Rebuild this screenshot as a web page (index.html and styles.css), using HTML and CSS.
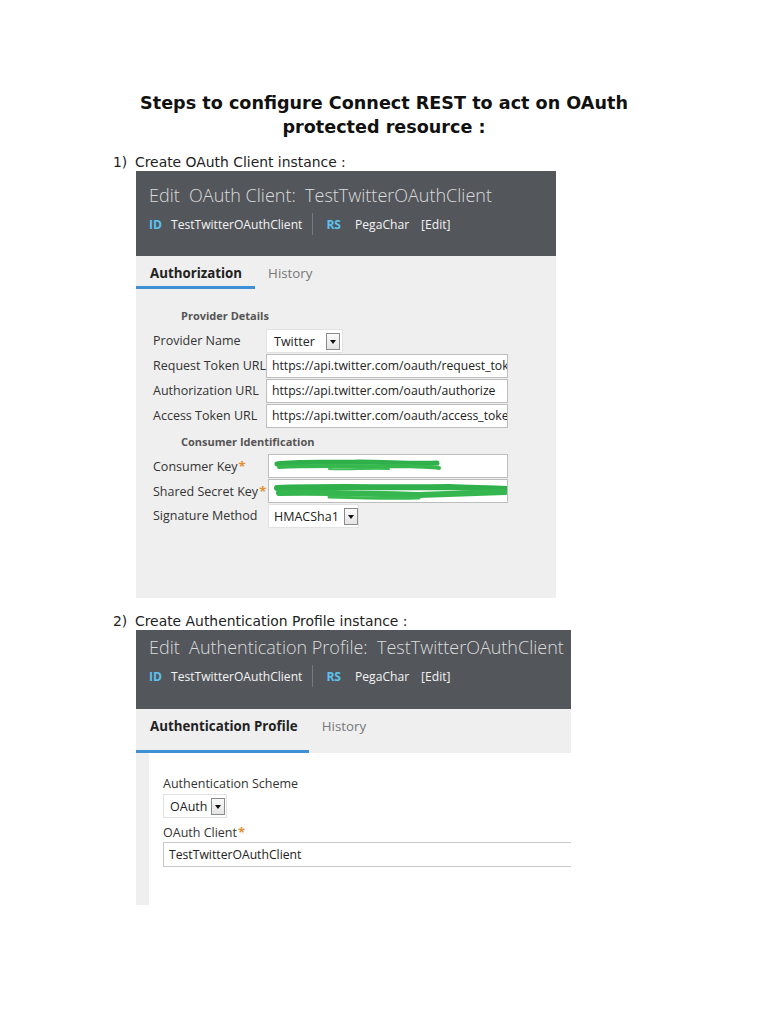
FILE: index.html
```html
<!DOCTYPE html>
<html>
<head>
<meta charset="utf-8">
<link rel="stylesheet" href="styles.css">
</head>
<body>
<div class="page">
  <h1 class="title">Steps to configure Connect REST to act on OAuth<br>protected resource :</h1>

  <div class="step"><span class="num">1)</span><span class="step-text">Create OAuth Client instance :</span></div>

  <div class="shot shot1">
    <div class="hdr">
      <div class="hdr-title">Edit&nbsp; OAuth Client:&nbsp; TestTwitterOAuthClient</div>
      <div class="hdr-meta">
        <span class="tag">ID</span><span class="meta-val">TestTwitterOAuthClient</span>
        <span class="sep"></span>
        <span class="tag tag-rs">RS</span><span class="meta-val">PegaChar</span><span class="meta-edit">[Edit]</span>
      </div>
    </div>
    <div class="tabs">
      <div class="tab active">Authorization</div>
      <div class="tab">History</div>
    </div>
    <div class="form1">
      <div class="section">Provider Details</div>
      <div class="grid g1">
        <div class="lbl">Provider Name</div>
        <div class="sel sel-twitter"><span>Twitter</span><span class="ddbtn"></span></div>
        <div class="lbl">Request Token URL</div>
        <div class="inp w242">https://api.twitter.com/oauth/request_token</div>
        <div class="lbl">Authorization URL</div>
        <div class="inp w242">https://api.twitter.com/oauth/authorize</div>
        <div class="lbl">Access Token URL</div>
        <div class="inp w242">https://api.twitter.com/oauth/access_token</div>
      </div>
      <div class="section sec2">Consumer Identification</div>
      <div class="grid g2">
        <div class="lbl">Consumer Key<span class="req">*</span></div>
        <div class="inp w240 redact">
          <svg class="scribble" width="240" height="24" viewBox="0 0 240 24">
            <path d="M8 9 C30 6 60 8 90 7 C120 7 140 9 168 8" stroke="#2fb04a" stroke-width="5" fill="none" stroke-linecap="round"/>
            <path d="M10 12 C50 10 100 12 140 11 C155 12 163 12 170 13" stroke="#37b84f" stroke-width="4" fill="none" stroke-linecap="round"/>
            <path d="M60 14 C80 15 100 13 120 14" stroke="#3cbb53" stroke-width="2" fill="none" stroke-linecap="round"/>
          </svg>
        </div>
        <div class="lbl">Shared Secret Key<span class="req">*</span></div>
        <div class="inp w240 redact">
          <svg class="scribble" width="240" height="24" viewBox="0 0 240 24">
            <path d="M8 8 C60 6 120 8 180 7 C205 8 225 8 238 9" stroke="#2fb04a" stroke-width="6" fill="none" stroke-linecap="round"/>
            <path d="M10 13 C60 12 110 14 150 15 C175 14 200 13 236 12" stroke="#36b64e" stroke-width="6" fill="none" stroke-linecap="round"/>
            <path d="M60 17 C90 18 120 19 150 18" stroke="#3cbb53" stroke-width="3" fill="none" stroke-linecap="round"/>
          </svg>
        </div>
        <div class="lbl">Signature Method</div>
        <div class="sel sel-hmac"><span>HMACSha1</span><span class="ddbtn"></span></div>
      </div>
    </div>
  </div>

  <div class="step step2"><span class="num">2)</span><span class="step-text">Create Authentication Profile instance :</span></div>

  <div class="shot shot2">
    <div class="hdr hdr2">
      <div class="hdr-title">Edit&nbsp; Authentication Profile:&nbsp; TestTwitterOAuthClient</div>
      <div class="hdr-meta">
        <span class="tag">ID</span><span class="meta-val">TestTwitterOAuthClient</span>
        <span class="sep"></span>
        <span class="tag tag-rs">RS</span><span class="meta-val">PegaChar</span><span class="meta-edit">[Edit]</span>
      </div>
    </div>
    <div class="tabs tabs2">
      <div class="tab active">Authentication Profile</div>
      <div class="tab">History</div>
    </div>
    <div class="body2">
      <div class="content2">
        <div class="lbl2">Authentication Scheme</div>
        <div class="sel sel-oauth"><span>OAuth</span><span class="ddbtn"></span></div>
        <div class="lbl2 lbl2b">OAuth Client<span class="req">*</span></div>
        <div class="inp inp-client">TestTwitterOAuthClient</div>
      </div>
    </div>
  </div>
</div>
</body>
</html>
```

FILE: styles.css
```css
* { box-sizing: border-box; }
html, body { margin: 0; padding: 0; background: #fff; }
.page {
  width: 768px;
  height: 1024px;
  overflow: hidden;
  font-family: "DejaVu Sans", sans-serif;
  color: #222;
}
.title {
  margin: 0;
  padding-top: 91px;
  text-align: center;
  font-family: "DejaVu Sans", sans-serif;
  font-weight: bold;
  font-size: 17.6px;
  line-height: 24px;
  color: #111;
}
.step {
  display: flex;
  margin-top: 14px;
  height: 18px;
  line-height: 18px;
  font-size: 13.9px;
  color: #222;
}
.step .num { width: 135px; padding-left: 113px; }
.step2 { margin-top: 14px; height: 18px; }

.shot {
  margin-left: 136px;
  font-family: "Open Sans", sans-serif;
}
.shot1 { width: 420px; height: 427px; background: #efefef; }
.shot2 { width: 435px; height: 275px; background: #efefef; }

.hdr {
  background: #53565b;
  height: 85px;
  padding: 10px 0 0 13px;
}
.hdr2 { height: 79px; padding-top: 3px; }
.hdr-title {
  font-size: 18px;
  line-height: 28px;
  color: #dcdcdc;
  font-weight: 300;
  white-space: nowrap;
}
.hdr-meta {
  display: flex;
  align-items: center;
  margin-top: 4px;
  height: 22px;
  font-size: 12.1px;
  color: #f4f4f4;
}
.tag { color: #5bc3ef; font-weight: bold; margin-right: 9px; }
.tag-rs { margin-right: 14px; }
.meta-val { margin-right: 10px; }
.sep { width: 1px; height: 22px; background: #777a7f; margin-right: 13px; }
.meta-edit { margin-left: 2px; }

.tabs { display: flex; height: 33px; }
.tab {
  padding: 7px 13px 0;
  line-height: 20px;
  font-size: 13.3px;
  color: #777;
}
.tab.active {
  color: #222;
  font-weight: bold;
  border-bottom: 3px solid #3d8fd6;
  padding-left: 14px;
}
.tabs2 .tab.active { padding-right: 11px; }

.form1 { padding-left: 17px; }
.section {
  margin-top: 19px;
  margin-left: 28px;
  font-size: 11px;
  font-weight: bold;
  color: #555;
  line-height: 16px;
}
.sec2 { margin-top: 6px; }
.grid {
  display: grid;
  grid-auto-rows: 24px;
  row-gap: 1px;
  align-items: center;
  font-size: 12.5px;
  color: #333;
}
.g1 { grid-template-columns: 113px auto; margin-top: 5px; }
.g2 { grid-template-columns: 115px auto; margin-top: 4px; }
.lbl { white-space: nowrap; line-height: 24px; }
.req { color: #e3902e; font-weight: bold; margin-left: 1px; font-size: 13px; }

.inp {
  height: 24px;
  background: #fff;
  border: 1px solid #bdbdbd;
  padding-left: 5px;
  line-height: 22px;
  white-space: nowrap;
  overflow: hidden;
  font-size: 12.2px;
  color: #222;
}
.w242 { width: 242px; }
.w240 { width: 240px; }
.redact { position: relative; padding: 0; }
.scribble { position: absolute; left: 0; top: 0; }

.sel {
  display: flex;
  align-items: center;
  height: 24px;
  background: #fff;
  border: 1px solid #e2e2e2;
  padding-left: 7px;
  font-size: 12.5px;
  color: #222;
  justify-self: start;
}
.sel-twitter { width: 77px; }
.sel-twitter span:first-child { width: 52px; }
.sel-hmac { width: 91px; padding-left: 5px; }
.sel-hmac span:first-child { width: 70px; }
.ddbtn {
  width: 14px;
  height: 17px;
  border: 1px solid #8a8a8a;
  background: linear-gradient(#fafafa, #e4e4e4);
  position: relative;
}
.ddbtn::after {
  content: "";
  position: absolute;
  left: 3px;
  top: 6px;
  border-left: 3px solid transparent;
  border-right: 3px solid transparent;
  border-top: 4px solid #111;
}

.tabs2 { height: 44px; }
.body2 { height: 152px; padding-left: 13px; }
.content2 { background: #fff; height: 152px; padding: 22px 0 0 14px; }
.lbl2 { font-size: 12.5px; line-height: 18px; color: #333; }
.lbl2b { margin-top: 5px; }
.sel-oauth { width: 64px; margin-top: 1px; padding-left: 6px; }
.sel-oauth span:first-child { width: 41px; }
.inp-client {
  margin-top: 0;
  height: 25px;
  border-right: none;
  width: 100%;
  line-height: 23px;
  border-color: #c8c8c8;
}
```
